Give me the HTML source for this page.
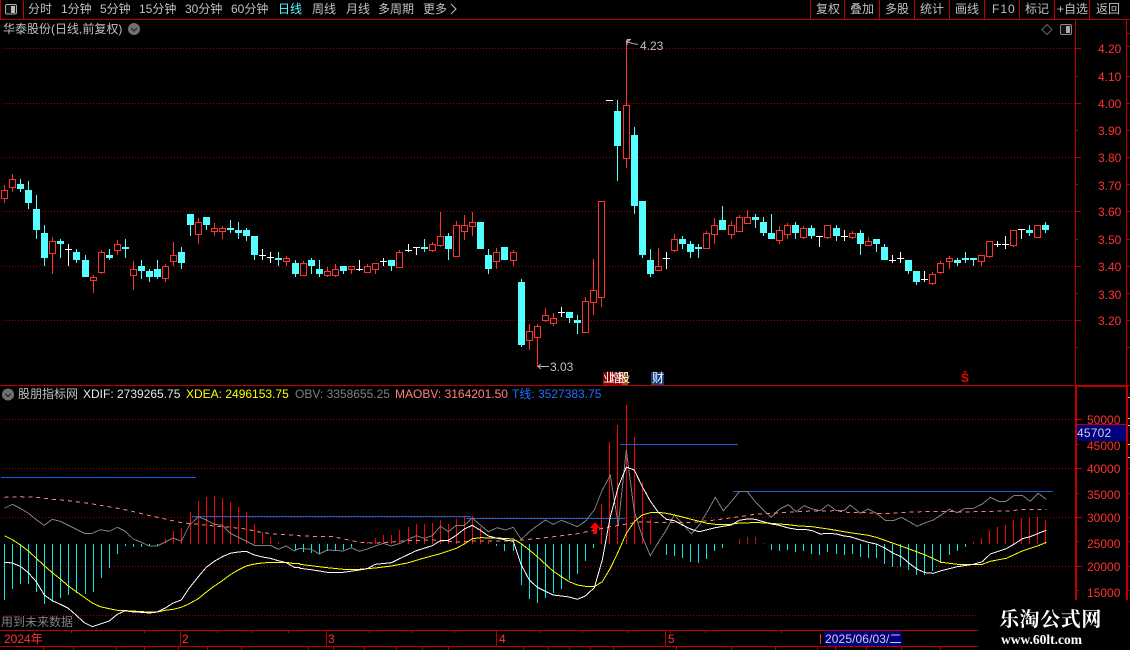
<!DOCTYPE html>
<html>
<head>
<meta charset="utf-8">
<style>
html,body{margin:0;padding:0;background:#000;}
#r{position:relative;width:1130px;height:650px;overflow:hidden;background:#000;font:12px/14px "Liberation Sans","WenQuanYi Zen Hei","Noto Sans CJK SC",sans-serif;color:#c0c0c0;}
#r span{position:absolute;white-space:nowrap;}
svg{position:absolute;left:0;top:0;}
.a{color:#ff3232;}
.m{color:#fff;text-align:center;}
</style>
</head>
<body>
<div id="r">
<svg id="s" width="1130" height="650" shape-rendering="crispEdges"></svg>

<span style="left:28px;top:2px">分时</span>
<span style="left:61px;top:2px">1分钟</span>
<span style="left:100px;top:2px">5分钟</span>
<span style="left:139px;top:2px">15分钟</span>
<span style="left:185px;top:2px">30分钟</span>
<span style="left:231px;top:2px">60分钟</span>
<span style="left:278px;top:2px;color:#54ffff">日线</span>
<span style="left:312px;top:2px">周线</span>
<span style="left:346px;top:2px">月线</span>
<span style="left:378px;top:2px">多周期</span>
<span style="left:423px;top:2px">更多</span>

<span style="left:816px;top:2px">复权</span>
<span style="left:850px;top:2px">叠加</span>
<span style="left:885px;top:2px">多股</span>
<span style="left:920px;top:2px">统计</span>
<span style="left:955px;top:2px">画线</span>
<span style="left:992px;top:2px;letter-spacing:1px">F10</span>
<span style="left:1025px;top:2px">标记</span>
<span style="left:1057px;top:2px">+自选</span>
<span style="left:1096px;top:2px">返回</span>

<span style="left:3px;top:22px">华泰股份(日线,前复权)</span>

<span class="a" style="left:1098px;top:42px">4.20</span>
<span class="a" style="left:1098px;top:70px">4.10</span>
<span class="a" style="left:1098px;top:97px">4.00</span>
<span class="a" style="left:1098px;top:124px">3.90</span>
<span class="a" style="left:1098px;top:151px">3.80</span>
<span class="a" style="left:1098px;top:179px">3.70</span>
<span class="a" style="left:1098px;top:205px">3.60</span>
<span class="a" style="left:1098px;top:233px">3.50</span>
<span class="a" style="left:1098px;top:260px">3.40</span>
<span class="a" style="left:1098px;top:288px">3.30</span>
<span class="a" style="left:1098px;top:314px">3.20</span>

<span style="left:640px;top:39px">4.23</span>
<span style="left:550px;top:360px">3.03</span>

<div style="position:absolute;left:603px;top:372px;width:19px;height:13px;background:#8b0000"></div>
<div style="position:absolute;left:622px;top:372px;width:6px;height:13px;background:#a05000"></div>
<span class="m" style="left:603px;top:371px">业</span>
<span class="m" style="left:610px;top:371px">增</span>
<span class="m" style="left:618px;top:371px">股</span>
<div style="position:absolute;left:651px;top:372px;width:13px;height:13px;background:#104080"></div>
<span class="m" style="left:652px;top:371px">财</span>
<span style="left:961px;top:371px;color:#ff0000;font-weight:bold">Ŝ</span>

<span style="left:18px;top:387px">股朋指标网</span>
<span style="left:83px;top:387px;color:#e8e8e8">XDIF: 2739265.75</span>
<span style="left:186px;top:387px;color:#ffff00">XDEA: 2496153.75</span>
<span style="left:295px;top:387px;color:#808080">OBV: 3358655.25</span>
<span style="left:395px;top:387px;color:#ff8080">MAOBV: 3164201.50</span>
<span style="left:512px;top:387px;color:#2070ff">T线: 3527383.75</span>

<span class="a" style="left:1087px;top:413px">50000</span>
<div style="position:absolute;left:1077px;top:425px;width:49px;height:16px;background:#000080"></div>
<span style="left:1077px;top:426px;color:#d0d0d0;letter-spacing:.2px">45702</span>
<span class="a" style="left:1087px;top:439px">45000</span>
<span class="a" style="left:1087px;top:462px">40000</span>
<span class="a" style="left:1087px;top:488px">35000</span>
<span class="a" style="left:1087px;top:511px">30000</span>
<span class="a" style="left:1087px;top:537px">25000</span>
<span class="a" style="left:1087px;top:560px">20000</span>
<span class="a" style="left:1087px;top:586px">15000</span>

<span style="left:1px;top:615px;color:#808080">用到未来数据</span>

<span class="a" style="left:4px;top:632px">2024年</span>
<span class="a" style="left:182px;top:632px">2</span>
<span class="a" style="left:328px;top:632px">3</span>
<span class="a" style="left:499px;top:632px">4</span>
<span class="a" style="left:668px;top:632px">5</span>
<div style="position:absolute;left:824px;top:631px;width:78px;height:15px;background:#000080"></div>
<span style="left:825px;top:632px;color:#d0d0d0;letter-spacing:.1px">2025/06/03/二</span>

<span style="left:999px;top:606px;color:#fff;font:bold 20px/24px 'Noto Serif CJK SC','Liberation Serif',serif;letter-spacing:.6px">乐淘公式网</span>
<span style="left:1001px;top:632px;color:#fff;font:bold 13.5px/16px 'Liberation Serif',serif">www.60lt.com</span>
</div>
<script>
var S='',R='#c00000';
function ln(a,b,c,d,col,extra){S+='<line x1="'+a+'" y1="'+b+'" x2="'+c+'" y2="'+d+'" stroke="'+col+'" stroke-width="1" '+(extra||'')+'/>';}
function X(i){return Math.floor(4.3+8.075*i);}
// grid
[48,103,157,211,266,320].forEach(function(y){ln(3,y+.5,1075,y+.5,'#a00000','stroke-dasharray="1 2"');ln(1075,y+.5,1081,y+.5,R);});
[76,130,184,239,293,347].forEach(function(y){ln(1075,y+.5,1078,y+.5,R);});
[419,468,517,566,615].forEach(function(y){ln(3,y+.5,y==615?978:1075,y+.5,'#a00000','stroke-dasharray="1 2"');if(y<600)ln(1076,y+.5,1082,y+.5,R);});
[444,493,541,590].forEach(function(y){ln(1076,y+.5,1079,y+.5,R);});
// frame
ln(0,19.5,1130,19.5,R);
ln(.5,0,.5,19,R);ln(23.5,0,23.5,19,R);
[810,844,879,914,949,984,1019,1054,1089].forEach(function(x){ln(x+.5,0,x+.5,19,R);});
ln(1075.5,19,1075.5,385,R);
ln(0,385.5,1130,385.5,R);
S+='<rect x="1075" y="386" width="2" height="214" fill="'+R+'"/><rect x="1126" y="386" width="2" height="214" fill="'+R+'"/><rect x="1075" y="385" width="53" height="2" fill="'+R+'"/>';
ln(1126.5,19,1126.5,385,R);
[33,46,76,103,130,157,184,211,239,266,293,320,347].forEach(function(y){ln(1127,y+.5,1130,y+.5,R);});
[397,418,425,444,457,468,493,517,541,566,590].forEach(function(y){ln(1128,y+.5,1130,y+.5,y<460?'#ccc':R);});
S+='<rect x="1077" y="424" width="49" height="1" fill="'+R+'"/><rect x="1077" y="440" width="49" height="1" fill="'+R+'"/>';
// time axis
ln(0,630.5,978,630.5,R);ln(0,646.5,978,646.5,R);
[180,326,496,665,824,901].forEach(function(x){ln(x+.5,631,x+.5,646,R);});
ln(820.5,634,820.5,644,'#ff3232');
[71,144,217,252,288,369,411,454,539,582,628,670,705,781,824,851].forEach(function(x){ln(x+.5,631,x+.5,633,R);});
[43,73,116,144,178,207,241,308,333,364,396,422,448,523,548,569,590,613,676,731,775,817,835,866,901,940].forEach(function(x){ln(x+.5,647,x+.5,650,R);});
// candles: type, top, bottom, hi, lo
var C=[
['r',190,198,185,203],['r',179,187,174,192],['c',184,189,179,192],['c',190,203,181,209],['c',209,230,195,239],['c',233,258,225,266],['r',241,253,237,274],['c',241,244,239,258],['w',249,249,244,266],['c',252,260,249,263],
['c',260,277,255,277],['r',277,280,275,293],['r',252,272,250,274],['c',255,258,249,260],['r',244,250,240,255],['c',247,249,239,258],['r',269,275,261,290],['c',266,271,260,279],['c',271,277,269,282],['c',269,277,260,279],
['r',266,278,264,282],['r',255,261,242,266],['c',252,263,247,269],['c',214,225,214,236],['r',222,234,218,244],['c',217,225,217,230],['r',228,231,223,236],['r',228,231,226,239],['c',228,230,220,233],['c',230,233,222,239],
['c',230,236,228,241],['c',236,255,236,260],['w',255,255,249,260],['w',257,257,252,263],['c',258,260,252,266],['r',258,261,256,266],['c',263,274,260,277],['r',263,275,261,275],['c',260,266,258,274],['c',269,274,260,277],
['r',271,275,267,277],['r',269,275,264,277],['c',266,271,266,274],['r',266,269,266,274],['w',269,269,260,271],['r',266,272,264,272],['r',263,269,263,274],['w',261,261,258,266],['c',260,266,260,271],['r',252,267,250,267],
['w',250,250,244,252],['w',247,247,247,255],['c',247,249,239,252],['r',244,250,242,252],['r',236,245,212,247],['c',236,249,233,260],['r',225,256,221,256],['r',225,231,215,240],['r',222,226,212,236],['c',222,249,222,249],
['c',255,269,249,274],['r',252,261,248,269],['c',247,260,247,260],['r',252,260,250,266],['c',282,345,279,347],['r',331,340,324,350],['r',326,337,324,367],['r',315,320,308,322],['r',318,323,313,326],['w',312,312,307,317],
['c',312,318,312,323],['c',320,323,315,334],['r',301,332,297,332],['r',290,302,259,315],['r',201,297,201,307],['w',100,100,100,100],['c',111,146,100,181],['r',105,158,40,168],['c',135,206,127,214],['c',201,255,201,258],
['c',260,274,249,277],['r',266,270,248,270],['w',258,258,252,269],['r',239,250,234,252],['c',239,244,236,249],['c',244,252,241,258],['c',247,249,244,258],['r',233,248,231,248],['r',225,234,218,244],['c',220,230,206,230],
['r',225,234,221,239],['r',217,231,215,231],['r',217,223,210,223],['c',217,220,214,228],['c',222,233,217,236],['c',233,239,214,239],['r',230,240,226,244],['r',225,234,223,239],['c',225,233,222,239],['r',228,237,226,239],
['c',228,236,225,239],['w',236,236,236,247],['r',225,237,225,239],['c',228,236,225,241],['w',236,236,230,241],['r',233,237,231,239],['c',233,244,230,255],['r',241,245,237,245],['c',239,244,239,252],['c',247,260,244,260],
['w',260,260,255,263],['w',258,258,252,263],['c',260,271,260,274],['c',271,282,271,285],['w',279,279,271,282],['r',274,283,272,285],['r',263,272,261,274],['r',258,261,256,269],['c',260,263,258,266],['c',258,260,252,263],
['c',258,260,258,266],['r',255,261,255,266],['r',241,256,241,258],['w',244,244,241,247],['w',244,244,236,249],['r',230,245,230,247],['w',229,229,229,239],['c',230,233,225,236],['r',225,237,225,237],['c',225,230,222,233]
];
C.forEach(function(c,i){
  var x=X(i),t=c[1],b=c[2],h=c[3],l=c[4],px=x+.5;
  if(c[0]=='w'){
    ln(x-3,t+.5,x+4,t+.5,'#fff');
    if(l>h)ln(px,h,px,l,'#fff');
  }else if(c[0]=='c'){
    if(l>h)ln(px,h,px,l,'#54ffff');
    S+='<rect x="'+(x-3)+'" y="'+t+'" width="7" height="'+(b-t)+'" fill="#54ffff"/>';
  }else{
    ln(px,h,px,t,'#ff3232');ln(px,b,px,l,'#ff3232');
    S+='<rect x="'+(x-2.5)+'" y="'+(t+.5)+'" width="6" height="'+(b-t)+'" fill="#000" stroke="#ff3232" stroke-width="1"/>';
  }
});
// histogram end values by index
var H=[600,589,584,584,592,604,602,598,595,593,594,592,578,568,554,546,547,547,546,546,
539,531,528,512,501,497,496,498,502,507,512,524,532,537,542,544,551,552,553,554,551,551,550,547,544,542,538,535,535,530,
527,524,524,523,520,524,519,517,516,527,542,546,551,551,585,599,603,598,593,589,580,574,561,548,504,442,425,405,437,482,
519,541,555,556,558,562,563,559,551,548,544,539,537,537,543,550,551,550,552,551,554,555,552,554,555,554,557,558,558,564,
567,567,570,575,575,571,563,555,551,547,542,538,530,527,525,520,518,518,517,520];
H.forEach(function(y,i){ if(y==544)return; var x=X(i)+.5; var dark=(i>=91&&i<=94);
  ln(x,544,x,y,y>544?'#00e8f0':(dark?'#c01010':'#ff0000'));});
// blue lines
var B='#1060e0';
ln(1,477.5,196,477.5,B);ln(192,516.5,471,516.5,B);ln(466,518.5,625,518.5,B);ln(620,444.5,738,444.5,B);ln(733,491.5,1053,491.5,B);
function P(arr,ox,oy,a,b){var o=[];for(var i=0;i<arr.length;i+=2){var x=ox+arr[i]/3,y=oy+arr[i+1]/3;if(x>=a&&x<b)o.push(x.toFixed(1)+','+y.toFixed(1));}return o.join(' ');}
function LINE(a7,a8,a9,a10,col,extra){
  var p=[P(a7,0,380,0,300),P(a8,300,380,300,590),P(a9,580,390,590,850),P(a10,850,380,850,1130)].join(' ');
  S+='<polyline points="'+p+'" fill="none" stroke="'+col+'" stroke-width="1" '+(extra||'')+'/>';
}
// grey OBV
LINE([13,385,37,373,61,385,85,400,109,419,133,436,157,418,181,424,205,436,229,448,253,460,277,460,301,449,328,454,352,442,376,454,400,477,424,487,448,498,472,498,496,486,520,474,544,484,568,436,595,410,619,420,643,433,667,436,691,460,715,472,739,484,763,496,811,496,835,508,859,498,883,513,899,505],
[0,505,34,508,58,522,82,510,130,513,154,503,178,514,202,507,226,498,250,490,274,498,301,490,325,478,349,467,373,475,397,467,421,439,445,455,469,436,493,436,517,414,541,435,565,455,592,443,616,450,640,442,664,478,688,455,712,437,736,420,760,433,784,421,808,430,832,440,856,424,883,390],
[43,360,67,300,91,256,115,405,139,180,163,365,187,440,211,497,235,457,259,420,283,375,307,400,334,432,358,405,382,365,406,322,430,362,454,335,478,305,502,305,526,335,550,360,574,382,598,358,625,344,649,365,673,347,697,357,721,362,745,344,769,362,793,362,817,347],
[0,375,7,380,31,400,55,387,79,400,106,421,130,422,154,412,178,425,202,439,226,428,250,420,274,405,298,388,322,398,346,385,370,385,397,372,421,352,445,364,469,364,493,346,517,346,541,364,565,340,589,358],'#808080');
// pink MAOBV
LINE([13,352,61,350,109,352,157,358,205,362,253,368,301,376,349,384,397,394,445,406,496,417,544,428,595,433,643,438,691,442,739,447,787,458,835,463,883,466,899,467],
[0,468,100,470,178,487,226,489,274,486,322,482,397,480,469,486,517,483,565,483,640,482,688,478,736,473,784,467,832,461,883,455],
[43,420,91,410,139,402,187,395,235,398,307,398,358,395,406,390,478,380,526,373,574,370,625,367,697,363,769,362],
[0,398,31,397,106,401,178,396,274,394,346,396,421,394,469,393,517,389,589,388],'#ff8080','stroke-dasharray="4 4"');
// yellow
LINE([13,467,37,479,61,495,85,513,109,535,133,557,157,578,181,597,205,618,229,635,253,652,277,669,301,680,328,686,352,691,400,693,424,695,472,696,496,691,520,688,544,682,568,671,595,656,619,636,643,618,667,602,691,584,715,570,739,558,763,552,787,549,811,547,859,547,883,551,899,551],
[0,553,34,557,82,563,130,568,178,568,226,564,274,558,322,549,373,534,421,521,469,505,493,492,517,476,541,473,592,474,640,477,664,491,688,510,712,530,736,552,760,574,784,590,808,605,832,615,856,619,883,620],
[43,590,67,575,91,535,115,485,139,430,163,395,187,375,211,368,235,367,259,370,283,375,307,381,334,388,358,394,382,400,406,403,430,404,454,403,478,399,502,399,526,397,550,399,574,400,598,402,625,404,649,407,697,410,745,417,793,425],
[0,458,55,466,79,472,130,490,178,507,226,525,274,547,322,553,370,554,397,553,421,544,469,535,517,513,565,497,589,487],'#ffff00');
// white
LINE([13,547,37,549,61,559,85,578,109,605,133,645,157,662,181,673,205,685,229,706,253,728,277,740,301,732,328,723,352,703,376,692,400,696,424,697,448,699,472,696,496,684,520,669,544,660,568,624,595,590,619,562,643,544,667,530,691,520,715,516,739,514,763,525,787,531,811,535,835,542,859,548,883,562,899,563],
[0,565,34,569,82,577,130,577,178,570,202,566,226,553,274,548,301,535,349,512,397,497,421,482,445,481,469,466,493,447,517,436,541,451,565,468,592,475,640,484,664,555,688,600,712,622,736,634,760,645,784,648,808,651,832,658,856,648,883,624],
[43,593,67,510,91,380,115,290,139,231,163,240,187,290,211,333,235,367,259,388,283,392,307,405,334,418,358,425,382,419,406,413,430,409,454,405,478,391,502,387,526,388,550,395,574,402,598,406,625,414,649,418,673,418,697,422,721,432,745,430,769,432,793,438,817,441],
[0,470,55,487,79,492,106,505,130,520,154,530,178,550,202,568,226,578,250,580,274,572,322,560,370,553,397,545,421,522,445,514,469,506,493,492,517,476,541,470,565,460,589,451],'#ffffff');
// red arrow
S+='<path d="M595 522L600 528H597V534H593V528H590Z" fill="#ff0000"/>';
// annotations
S+='<g shape-rendering="geometricPrecision" fill="none" stroke="#b8b8b8" stroke-width="1"><path d="M627 39.5V45M627 39.5H631M626 42L630 40M627 42C631 42 633 45 638 44"/><path d="M538 366.5H549M538 366.5L541 364M538 366.5L541 369"/><path d="M451 4L456 9L451 14" stroke="#c0c0c0"/></g>';
// icons
function ic(x){S+='<g shape-rendering="geometricPrecision"><rect x="'+(x+.5)+'" y="4.5" width="11" height="9.5" rx="1.5" fill="#111" stroke="#aaa"/><rect x="'+(x+6)+'" y="6" width="4" height="7" fill="#bbb"/></g>';}
ic(5);
S+='<g shape-rendering="geometricPrecision"><rect x="1060.5" y="24.5" width="11" height="10" rx="1.5" fill="#111" stroke="#888"/><rect x="1066" y="26" width="4" height="7" fill="#aaa"/>';
S+='<path d="M1047 24.5L1052 29.5L1047 34.5L1042 29.5Z" fill="none" stroke="#666"/>';
function chev(x,y){S+='<circle cx="'+x+'" cy="'+y+'" r="6" fill="#707070"/><path d="M'+(x-3)+' '+(y-1)+'L'+x+' '+(y+2)+'L'+(x+3)+' '+(y-1)+'" fill="none" stroke="#222" stroke-width="1.2"/>';}
chev(134,29);chev(8,394.5);
S+='</g>';
document.getElementById('s').innerHTML=S;
</script>
</body>
</html>
